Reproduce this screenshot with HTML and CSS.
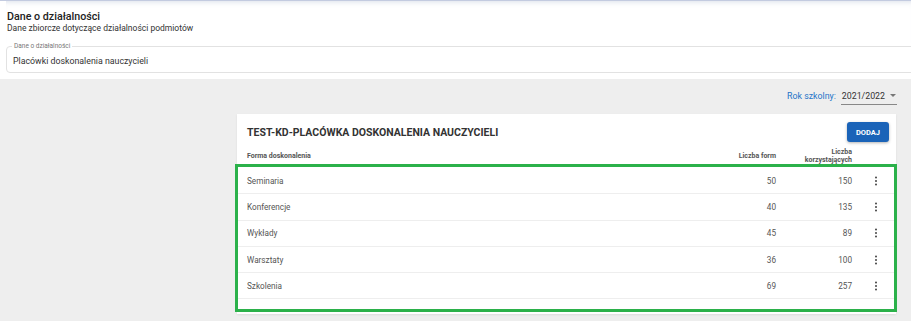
FILE: index.html
```html
<!DOCTYPE html>
<html>
<head>
  <meta name="viewport" content="width=device-width, initial-scale=1">
  <title>Dane o działalności</title>
  <link rel="stylesheet" href="styles.css">
</head>
<body>
  <div class="page-header">
    <div class="header-titles">
      <h1>Dane o działalności</h1>
      <p>Dane zbiorcze dotyczące działalności podmiotów</p>
    </div>
    <fieldset class="outlined-field">
      <legend>Dane o działalności</legend>
      <div class="field-value">Placówki doskonalenia nauczycieli</div>
    </fieldset>
  </div>

  <div class="content">
    <div class="year-bar">
      <span class="year-label">Rok szkolny:</span>
      <div class="year-select">
        <span>2021/2022</span>
        <span class="arrow"></span>
      </div>
    </div>

    <div class="card">
      <div class="card-head">
        <h2>TEST-KD-PLACÓWKA DOSKONALENIA NAUCZYCIELI</h2>
        <button class="add-btn">DODAJ</button>
      </div>

      <div class="table-head">
        <div class="col-name">Forma doskonalenia</div>
        <div class="col-num">Liczba form</div>
        <div class="col-num wide">Liczba<br>korzystających</div>
        <div class="col-menu"></div>
      </div>

      <div class="rows">
        <div class="row">
          <div class="col-name">Seminaria</div>
          <div class="col-num">50</div>
          <div class="col-num wide">150</div>
          <div class="col-menu"><svg viewBox="0 0 24 24"><circle cx="12" cy="5" r="2"/><circle cx="12" cy="12" r="2"/><circle cx="12" cy="19" r="2"/></svg></div>
        </div>
        <div class="row">
          <div class="col-name">Konferencje</div>
          <div class="col-num">40</div>
          <div class="col-num wide">135</div>
          <div class="col-menu"><svg viewBox="0 0 24 24"><circle cx="12" cy="5" r="2"/><circle cx="12" cy="12" r="2"/><circle cx="12" cy="19" r="2"/></svg></div>
        </div>
        <div class="row">
          <div class="col-name">Wykłady</div>
          <div class="col-num">45</div>
          <div class="col-num wide">89</div>
          <div class="col-menu"><svg viewBox="0 0 24 24"><circle cx="12" cy="5" r="2"/><circle cx="12" cy="12" r="2"/><circle cx="12" cy="19" r="2"/></svg></div>
        </div>
        <div class="row">
          <div class="col-name">Warsztaty</div>
          <div class="col-num">36</div>
          <div class="col-num wide">100</div>
          <div class="col-menu"><svg viewBox="0 0 24 24"><circle cx="12" cy="5" r="2"/><circle cx="12" cy="12" r="2"/><circle cx="12" cy="19" r="2"/></svg></div>
        </div>
        <div class="row">
          <div class="col-name">Szkolenia</div>
          <div class="col-num">69</div>
          <div class="col-num wide">257</div>
          <div class="col-menu"><svg viewBox="0 0 24 24"><circle cx="12" cy="5" r="2"/><circle cx="12" cy="12" r="2"/><circle cx="12" cy="19" r="2"/></svg></div>
        </div>
      </div>
    </div>
  </div>
</body>
</html>
```

FILE: styles.css
```css
* {
  margin: 0;
  padding: 0;
  box-sizing: border-box;
}

body {
  font-family: Roboto, 'Liberation Sans', Arial, sans-serif;
  background: #eeeeee;
  color: #333;
  overflow: hidden;
  height: 321px;
}

.page-header {
  background: #fff;
  border-top: 1px solid #c3cbe0;
  padding: 0 0 6px 6px;
}

.header-titles {
  height: 42px;
  padding: 9px 0 0 1px;
  box-shadow: inset 0 6px 6px -6px rgba(120, 140, 180, 0.35);
}

.header-titles h1 {
  font-size: 10.7px;
  font-weight: 500;
  color: #222;
  line-height: 13px;
}

.header-titles p {
  font-size: 8.5px;
  color: #333;
  line-height: 11px;
}

.outlined-field {
  border: 1px solid #e2e2e2;
  border-radius: 4px;
  margin-right: -10px;
  height: 31px;
  padding: 0 6px;
  margin-top: -1px;
}

.outlined-field legend {
  font-size: 6.5px;
  color: #777;
  padding: 0 2px;
  margin-left: -1px;
  line-height: 8px;
}

.field-value {
  font-size: 8.8px;
  color: #333;
  line-height: 12px;
  padding-top: 5px;
}

.content {
  padding: 6px 14px 0 237px;
}

.year-bar {
  display: flex;
  justify-content: flex-end;
  align-items: center;
  gap: 5px;
  height: 22px;
}

.year-label {
  font-size: 8.8px;
  color: #1e73c8;
}

.year-select {
  display: flex;
  align-items: center;
  gap: 5px;
  font-size: 8.8px;
  color: #333;
  border-bottom: 1px solid #888;
  height: 18px;
  padding-left: 1px;
}

.arrow {
  width: 0;
  height: 0;
  border-left: 3px solid transparent;
  border-right: 3px solid transparent;
  border-top: 3px solid #777;
  margin-right: 1px;
}

.card {
  background: #fff;
  margin-top: 7px;
  width: 659px;
  height: 200px;
  box-shadow: 0 1px 2px rgba(0, 0, 0, 0.08);
}

.card-head {
  display: flex;
  justify-content: space-between;
  align-items: center;
  padding: 8px 7px 0 10px;
}

.card-head h2 {
  font-size: 10.5px;
  font-weight: 700;
  color: #333;
}

.add-btn {
  background: #1a63b8;
  color: #fff;
  border: none;
  border-radius: 3px;
  font-family: inherit;
  font-size: 7.5px;
  font-weight: 700;
  width: 42px;
  height: 20px;
  box-shadow: 0 1px 3px rgba(0, 0, 0, 0.3);
}

.table-head,
.row {
  display: flex;
  align-items: center;
  padding: 0 0 0 10px;
}

.table-head {
  height: 23px;
  padding-top: 4px;
  font-size: 7px;
  font-weight: 700;
  color: #555;
}

.col-name {
  flex: 1;
}

.col-num {
  width: 70px;
  text-align: right;
}

.col-num.wide {
  width: 80px;
  padding-right: 4px;
}

.col-menu {
  width: 40px;
  display: flex;
  justify-content: center;
}

.col-menu svg {
  width: 12px;
  height: 12px;
  fill: #444;
}

.rows {
  outline: 3px solid #2bb14a;
  outline-offset: -2px;
  padding: 3px 0 12px;
  margin-left: -1px;
  padding-left: 1px;
}

.row {
  height: 26.3px;
  border-bottom: 1px solid #eeeeee;
  font-size: 8.2px;
  color: #555;
}
```
